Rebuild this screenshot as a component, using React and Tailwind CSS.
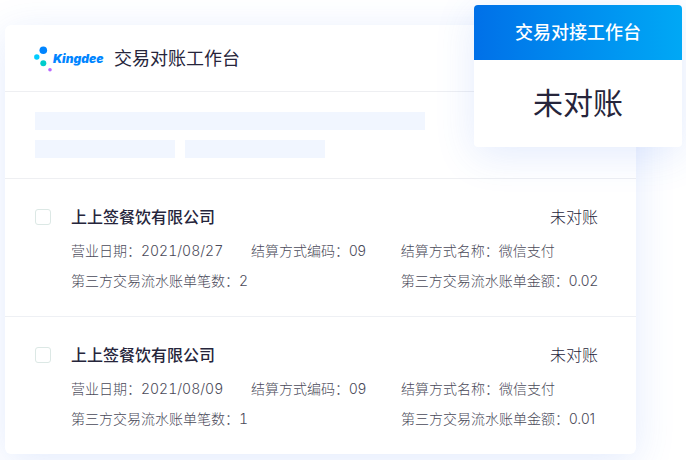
const records = [
  { id: 1, company: '上上签餐饮有限公司', date: '2021/08/27', code: '09', method: '微信支付', count: 2, amount: '0.02', status: '未对账' },
  { id: 2, company: '上上签餐饮有限公司', date: '2021/08/09', code: '09', method: '微信支付', count: 1, amount: '0.01', status: '未对账' },
];

function Logo() {
  return (
    <div className="flex items-center">
      <svg className="w-[19px] h-7 shrink-0" viewBox="0 0 19 28" aria-hidden="true">
        <circle cx="9.3" cy="5.2" r="3.8" fill="#0085ff" />
        <circle cx="2.8" cy="12" r="2.7" fill="#00ccff" />
        <circle cx="9.3" cy="18.2" r="3" fill="#00cccc" />
        <circle cx="16" cy="24.8" r="1.8" fill="#b866ff" />
      </svg>
      <span className="w-[53px] text-xs leading-5 font-black italic text-[#0085ff]">Kingdee</span>
    </div>
  );
}

function Record({ record }) {
  const inputId = `record-${record.id}`;
  return (
    <li className="flex items-start border-b border-[#eef0f4] last:border-b-0 pl-[30px] pr-[38px] pt-[26px] pb-5">
      <input
        id={inputId}
        type="checkbox"
        className="appearance-none w-4 h-4 mt-1 mr-5 shrink-0 rounded-[3px] border border-[#dce8e5] bg-white"
      />
      <div className="flex-1 min-w-0">
        <div className="flex justify-between text-base leading-6 text-[#26253b]">
          <label htmlFor={inputId} className="font-medium">{record.company}</label>
          <span className="font-light">{record.status}</span>
        </div>
        <div className="mt-[7px] grid grid-cols-[180fr_150fr_197fr] text-sm leading-[30px] font-light text-[#4a4a59] whitespace-nowrap">
          <span>营业日期：<span className="tabular-nums">{record.date}</span></span>
          <span>结算方式编码：{record.code}</span>
          <span>结算方式名称：{record.method}</span>
          <span className="col-span-2">第三方交易流水账单笔数：<span className="tabular-nums">{record.count}</span></span>
          <span>第三方交易流水账单金额：{record.amount}</span>
        </div>
      </div>
    </li>
  );
}

export default function App() {
  return (
    <div className="relative min-h-screen bg-white pt-[25px] pl-[5px] pr-[50px] pb-1.5 overflow-hidden font-['Inter','Noto_Sans_CJK_SC',sans-serif]">
      <main className="rounded-md bg-white shadow-[0_8px_40px_rgba(60,110,240,0.14)]">
        <header className="flex items-center gap-2 h-[67px] pt-px pl-[29px] border-b border-[#eeeff2]">
          <Logo />
          <h1 className="text-lg leading-6 font-normal text-[#26253b]">交易对账工作台</h1>
        </header>

        <div className="px-[30px] py-5 border-b border-[#eeeff2]">
          <div className="h-[18px] max-w-[390px] bg-[#f1f6ff]" />
          <div className="flex gap-2.5 mt-2.5">
            <div className="h-[18px] w-[140px] bg-[#f1f6ff]" />
            <div className="h-[18px] w-[140px] bg-[#f1f6ff]" />
          </div>
        </div>

        <ul>
          {records.map((record) => (
            <Record key={record.id} record={record} />
          ))}
        </ul>
      </main>

      <aside className="absolute top-[5px] right-1 w-52 rounded-sm overflow-hidden bg-white text-center shadow-[0_8px_40px_rgba(60,110,240,0.14)]">
        <h2 className="bg-linear-to-r from-[#0070e8] to-[#00a8f5] py-4 text-lg leading-[23px] font-medium text-white">交易对接工作台</h2>
        <p className="py-6 text-3xl leading-[39px] text-[#26253b]">未对账</p>
      </aside>
    </div>
  );
}
